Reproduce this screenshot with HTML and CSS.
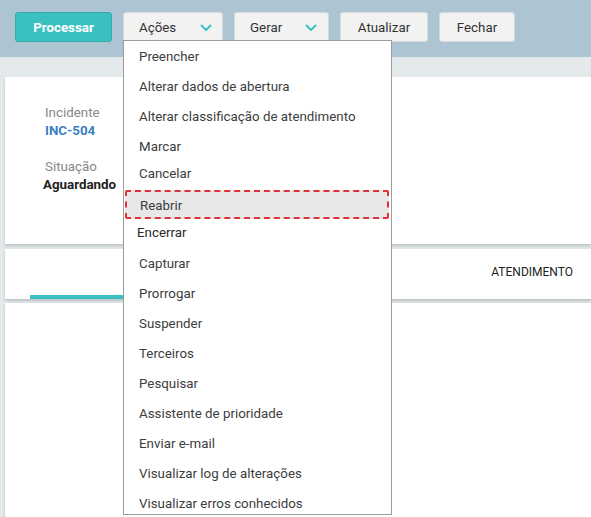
FILE: index.html
```html
<!DOCTYPE html>
<html lang="pt">
  <head>
    <meta charset="UTF-8" />
    <meta name="viewport" content="width=device-width, initial-scale=1.0" />
    <title>Incidente INC-504</title>
    <link rel="stylesheet" href="styles.css">
  </head>
  <body>
    <div class="toolbar">
      <button class="btn btn-primary btn-processar">Processar</button>
      <div class="dropdown">
        <button class="btn btn-select btn-acoes">
          <span>Ações</span>
          <svg class="chevron" width="12" height="7" viewBox="0 0 12 7"><polyline points="1,1 6,6 11,1" /></svg>
        </button>
        <ul class="menu">
          <li class="item">Preencher</li>
          <li class="item">Alterar dados de abertura</li>
          <li class="item">Alterar classificação de atendimento</li>
          <li class="item">Marcar</li>
          <li class="item short">Cancelar</li>
          <li class="item active">Reabrir</li>
          <li class="item encerrar">Encerrar</li>
          <li class="item">Capturar</li>
          <li class="item">Prorrogar</li>
          <li class="item">Suspender</li>
          <li class="item">Terceiros</li>
          <li class="item">Pesquisar</li>
          <li class="item">Assistente de prioridade</li>
          <li class="item">Enviar e-mail</li>
          <li class="item">Visualizar log de alterações</li>
          <li class="item">Visualizar erros conhecidos</li>
        </ul>
      </div>
      <button class="btn btn-select btn-gerar">
        <span>Gerar</span>
        <svg class="chevron" width="12" height="7" viewBox="0 0 12 7"><polyline points="1,1 6,6 11,1" /></svg>
      </button>
      <button class="btn btn-atualizar">Atualizar</button>
      <button class="btn btn-fechar">Fechar</button>
    </div>

    <div class="main">
      <div class="card card-info">
        <div class="label">Incidente</div>
        <div class="value link">INC-504</div>
        <div class="label gap">Situação</div>
        <div class="value status">Aguardando</div>
      </div>

      <div class="card card-tabs">
        <div class="tab selected"></div>
        <div class="tab">ATENDIMENTO</div>
      </div>

      <div class="card card-body"></div>
    </div>
  </body>
</html>
```

FILE: styles.css
```css
* {
  margin: 0;
  padding: 0;
  box-sizing: border-box;
}
body {
  background: #e4e9ec;
  font-family: Roboto, 'Liberation Sans', Arial, sans-serif;
  font-size: 13.33px;
  color: #333;
  overflow: hidden;
}
.toolbar {
  height: 57px;
  background: #adc5d2;
  padding: 12px 0 0 15px;
  display: flex;
  align-items: flex-start;
  gap: 11px;
}
.btn {
  height: 30px;
  border: 1px solid #d6d9db;
  border-radius: 3px;
  background: #f2f2f2;
  color: #333;
  font-family: inherit;
  font-size: 13.33px;
  padding-top: 1px;
  cursor: pointer;
}
.btn-primary {
  background: #3bc0c1;
  border-color: #34a9aa;
  color: #fff;
  font-weight: bold;
}
.btn-processar { width: 97px; }
.btn-select {
  display: flex;
  align-items: center;
  justify-content: space-between;
  padding: 0 10px 0 15px;
}
.btn-acoes { width: 100px; }
.btn-gerar { width: 95px; padding-right: 11px; }
.btn-atualizar { width: 88px; }
.btn-fechar { width: 76px; }
.chevron polyline {
  fill: none;
  stroke: #3bc0c1;
  stroke-width: 2;
}
.dropdown {
  position: relative;
}
.menu {
  position: absolute;
  top: 28px;
  left: 0;
  z-index: 10;
  width: 269px;
  height: 475px;
  overflow: hidden;
  list-style: none;
  background: #fff;
  border: 1px solid #9c9c9c;
}
.menu .item {
  height: 30px;
  line-height: 32px;
  padding-left: 15px;
  color: #3d3d3d;
  white-space: nowrap;
}
.menu .item.short {
  height: 24px;
  line-height: 26px;
}
.menu .item.active {
  height: 29px;
  line-height: 28px;
  margin: 5px 2px 0 1px;
  padding-left: 13px;
  background: #e8e8e8;
  border: 2px dashed #e0303a;
  border-radius: 2px;
}
.menu .item.encerrar {
  height: 29px;
  line-height: 27px;
  padding-left: 13px;
  color: #2a2a2a;
}
.main {
  padding: 20px 0 0 5px;
}
.card {
  background: #fff;
  box-shadow: 0 2px 3px rgba(0, 0, 0, 0.18);
}
.card-info {
  height: 167px;
  padding: 27px 0 0 40px;
}
.label {
  line-height: 18px;
  color: #888;
}
.label.gap {
  margin-top: 18px;
}
.value {
  line-height: 18px;
  font-weight: bold;
}
.value.link {
  color: #3b7fc4;
}
.value.status {
  color: #222;
  margin-left: -2px;
}
.card-tabs {
  margin-top: 5px;
  height: 50px;
  display: flex;
  justify-content: space-between;
  padding: 0 18px 0 25px;
}
.tab {
  height: 50px;
  line-height: 47px;
  border-bottom: 4px solid transparent;
  font-size: 12px;
  color: #222;
}
.tab.selected {
  width: 240px;
  border-bottom-color: #3bc0c1;
}
.card-body {
  margin-top: 4px;
  height: 214px;
}
```
